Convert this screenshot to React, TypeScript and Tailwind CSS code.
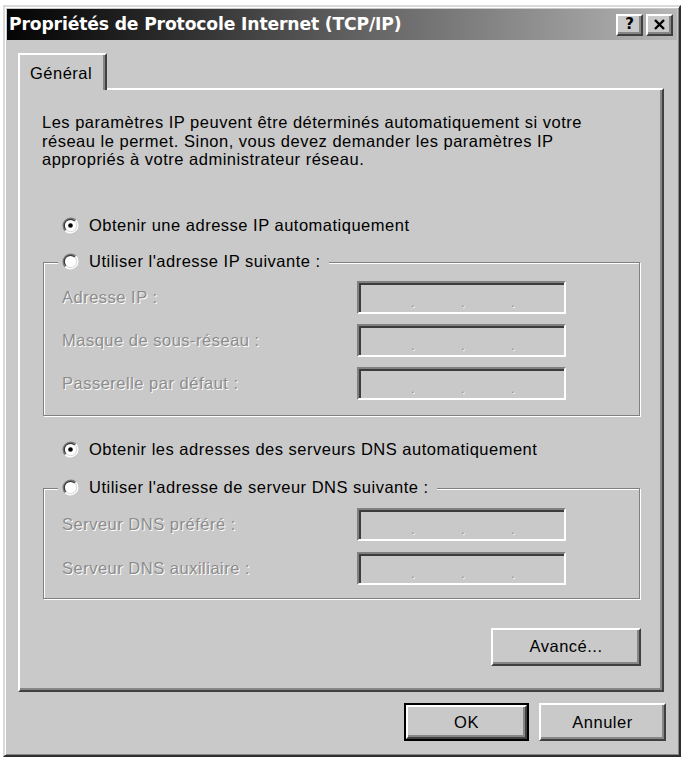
import React from "react";

const sans = "font-['Liberation_Sans',Arial,sans-serif]";

function Radio({ checked }: { checked?: boolean }) {
  return (
    <svg width="17" height="17" viewBox="0 0 17 17" className="shrink-0">
      <circle cx="8.5" cy="8.5" r="7" fill="#fff" />
      <path d="M3.2 13.8 A7.5 7.5 0 0 1 13.8 3.2" stroke="#7c7c7c" strokeWidth="1.4" fill="none" />
      <path d="M4.1 12.9 A6.2 6.2 0 0 1 12.9 4.1" stroke="#3a3a3a" strokeWidth="1.3" fill="none" />
      <path d="M13.8 3.2 A7.5 7.5 0 0 1 3.2 13.8" stroke="#ffffff" strokeWidth="1.4" fill="none" />
      <path d="M12.9 4.1 A6.2 6.2 0 0 1 4.1 12.9" stroke="#dedede" strokeWidth="1.3" fill="none" />
      {checked && <circle cx="8.5" cy="8.5" r="2.3" fill="#000" />}
    </svg>
  );
}

function IpField() {
  return (
    <div className="flex h-[33px] w-[209px] items-end border-2 border-t-[#808080] border-l-[#808080] border-b-white border-r-white pb-[3px] shadow-[inset_2px_2px_0_#3c3c3c] text-[13px] leading-none tracking-normal text-[#8a8a8a]">
      <span className="ml-[52px] w-[4px] [text-shadow:1px_1px_0_#fff]">.</span>
      <span className="ml-[46px] w-[4px] [text-shadow:1px_1px_0_#fff]">.</span>
      <span className="ml-[46px] w-[4px] [text-shadow:1px_1px_0_#fff]">.</span>
    </div>
  );
}

function FieldRow({ label }: { label: string }) {
  return (
    <div className="flex h-[33px] items-center">
      <span className="w-[295px] text-[#8c8c8c] [text-shadow:1px_1px_0_#fff]">{label}</span>
      <IpField />
    </div>
  );
}

function Legend({ label }: { label: string }) {
  return (
    <div className="-mt-[11px] -ml-[4px] flex h-[20px] w-fit items-center gap-[10px] bg-[#c9c9c9] pl-[4px] pr-[8px]">
      <Radio />
      <span>{label}</span>
    </div>
  );
}

function Raised({ children, className }: { children: React.ReactNode; className: string }) {
  return (
    <div
      className={
        "flex items-center justify-center border-2 border-t-white border-l-white border-b-[#404040] border-r-[#404040] shadow-[inset_-2px_-2px_0_#868686] " +
        className
      }
    >
      {children}
    </div>
  );
}

export default function App() {
  return (
    <div className={`h-[759px] w-[684px] bg-white pl-[3px] pt-[5px] text-[16.5px] tracking-[0.5px] text-black ${sans}`}>
      <div className="flex h-[752px] w-[678px] flex-col border-2 border-t-[#dadada] border-l-[#dadada] border-b-[#2e2e2e] border-r-[#2e2e2e] bg-[#c9c9c9] p-[2px] shadow-[inset_1px_1px_0_#fff,inset_-1px_-1px_0_#858585]">
        {/* title bar */}
        <div className="flex h-[31px] items-center bg-linear-to-r from-[#050505] via-[#5e5e5e] to-[#b6b6b6] pl-[2px] pr-[4px]">
          <span className="font-['DejaVu_Sans',Tahoma,sans-serif] text-[17.2px] font-bold tracking-[-0.15px] text-white">
            Propriétés de Protocole Internet (TCP/IP)
          </span>
          <div className="ml-auto flex gap-[3px]">
            <Raised className="h-[22px] w-[27px] bg-[#c9c9c9] font-['DejaVu_Sans',sans-serif] text-[15px] font-bold leading-none tracking-normal">
              ?
            </Raised>
            <Raised className="h-[22px] w-[27px] bg-[#c9c9c9]">
              <svg width="13" height="11" viewBox="0 0 13 11">
                <path d="M2 1 L11 10 M11 1 L2 10" stroke="#000" strokeWidth="2.4" />
              </svg>
            </Raised>
          </div>
        </div>

        <div className="flex flex-col px-[11px] pt-[13px]">
          {/* tab */}
          <div className="relative z-10 -mb-[2px] flex h-[37px] w-[89px] items-center border-l-2 border-t-2 border-r-2 border-l-white border-t-white border-r-[#404040] bg-[#c9c9c9] pl-[10px] pt-[2px] shadow-[inset_-2px_0_0_#868686]">
            Général
          </div>

          {/* panel */}
          <div className="flex h-[604px] w-[646px] flex-col border-2 border-t-white border-l-white border-b-[#404040] border-r-[#404040] shadow-[inset_-2px_-2px_0_#868686]">
            <p className="ml-[22px] mt-[23px] leading-[18.5px]">
              Les paramètres IP peuvent être déterminés automatiquement si votre
              <br />
              réseau le permet. Sinon, vous devez demander les paramètres IP
              <br />
              appropriés à votre administrateur réseau.
            </p>

            <div className="ml-[42px] mt-[47px] flex h-[20px] items-center gap-[10px]">
              <Radio checked />
              <span>Obtenir une adresse IP automatiquement</span>
            </div>

            <div className="ml-[23px] mt-[26px] flex w-[597px] flex-col border border-[#808080] pb-[15px] pl-[18px] shadow-[inset_1px_1px_0_#fff,1px_1px_0_#fff]">
              <Legend label="Utiliser l'adresse IP suivante :" />
              <div className="mt-[9px] flex flex-col gap-[10px]">
                <FieldRow label="Adresse IP :" />
                <FieldRow label="Masque de sous-réseau :" />
                <FieldRow label="Passerelle par défaut :" />
              </div>
            </div>

            <div className="ml-[42px] mt-[24px] flex h-[20px] items-center gap-[10px]">
              <Radio checked />
              <span>Obtenir les adresses des serveurs DNS automatiquement</span>
            </div>

            <div className="ml-[23px] mt-[28px] flex w-[597px] flex-col border border-[#808080] pb-[13px] pl-[18px] shadow-[inset_1px_1px_0_#fff,1px_1px_0_#fff]">
              <Legend label="Utiliser l'adresse de serveur DNS suivante :" />
              <div className="mt-[10px] flex flex-col gap-[11px]">
                <FieldRow label="Serveur DNS préféré :" />
                <FieldRow label="Serveur DNS auxiliaire :" />
              </div>
            </div>

            <div className="mr-[21px] mt-[29px] flex justify-end">
              <Raised className="h-[38px] w-[150px]">Avancé...</Raised>
            </div>
          </div>

          {/* dialog buttons */}
          <div className="mt-[11px] flex justify-end gap-[10px]">
            <div className="border-2 border-black">
              <Raised className="h-[34px] w-[121px]">OK</Raised>
            </div>
            <Raised className="h-[38px] w-[127px]">Annuler</Raised>
          </div>
        </div>
      </div>
    </div>
  );
}
